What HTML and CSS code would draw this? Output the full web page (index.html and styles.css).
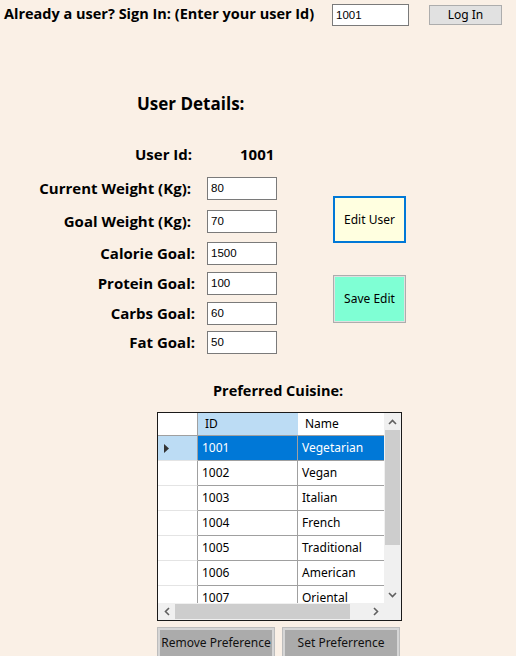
FILE: index.html
```html
<!DOCTYPE html>
<html>
<head>
<meta charset="utf-8">
<link rel="stylesheet" href="styles.css">
</head>
<body>
<div class="page">
  <div class="signin">
    <span class="signin-label">Already a user? Sign In: (Enter your user Id)</span>
    <div class="tb tb-login">1001</div>
    <div class="btn-login">Log In</div>
  </div>

  <div class="details-title">User Details:</div>

  <div class="userid-row">
    <span class="lbl userid-lbl">User Id:</span>
    <span class="lbl userid-val">1001</span>
  </div>

  <div class="form-area">
    <div class="form-grid">
      <div class="lbl f-lbl narrow">Current Weight (Kg):</div><div class="tb">80</div>
      <div class="lbl f-lbl narrow">Goal Weight (Kg):</div><div class="tb">70</div>
      <div class="lbl f-lbl">Calorie Goal:</div><div class="tb">1500</div>
      <div class="lbl f-lbl">Protein Goal:</div><div class="tb">100</div>
      <div class="lbl f-lbl">Carbs Goal:</div><div class="tb">60</div>
      <div class="lbl f-lbl">Fat Goal:</div><div class="tb">50</div>
    </div>
    <div class="side-btns">
      <div class="btn-edit">Edit User</div>
      <div class="btn-save">Save Edit</div>
    </div>
  </div>

  <div class="cuisine-title">Preferred Cuisine:</div>

  <div class="dgv">
    <div class="dgv-main">
      <div class="dgv-body">
        <div class="row hdr">
          <div class="rh corner"></div>
          <div class="c c-id hsel">ID</div>
          <div class="c c-name">Name</div>
        </div>
        <div class="row sel">
          <div class="rh rhsel"><svg width="5" height="9" viewBox="0 0 5 9"><path d="M0 0 L5 4.5 L0 9 Z" fill="#333"/></svg></div>
          <div class="c c-id">1001</div>
          <div class="c c-name">Vegetarian</div>
        </div>
        <div class="row"><div class="rh"></div><div class="c c-id">1002</div><div class="c c-name">Vegan</div></div>
        <div class="row"><div class="rh"></div><div class="c c-id">1003</div><div class="c c-name">Italian</div></div>
        <div class="row"><div class="rh"></div><div class="c c-id">1004</div><div class="c c-name">French</div></div>
        <div class="row"><div class="rh"></div><div class="c c-id">1005</div><div class="c c-name">Traditional</div></div>
        <div class="row"><div class="rh"></div><div class="c c-id">1006</div><div class="c c-name">American</div></div>
        <div class="row"><div class="rh"></div><div class="c c-id">1007</div><div class="c c-name">Oriental</div></div>
      </div>
      <div class="vscroll">
        <div class="arrow"><svg width="9" height="6" viewBox="0 0 9 6"><path d="M1 5 L4.5 1.5 L8 5" stroke="#606060" stroke-width="1.6" fill="none"/></svg></div>
        <div class="vtrack"><div class="vthumb"></div></div>
        <div class="arrow"><svg width="9" height="6" viewBox="0 0 9 6"><path d="M1 1 L4.5 4.5 L8 1" stroke="#606060" stroke-width="1.6" fill="none"/></svg></div>
      </div>
    </div>
    <div class="hscroll">
      <div class="harrow"><svg width="6" height="9" viewBox="0 0 6 9"><path d="M5 1 L1.5 4.5 L5 8" stroke="#606060" stroke-width="1.6" fill="none"/></svg></div>
      <div class="htrack"><div class="hthumb"></div></div>
      <div class="harrow"><svg width="6" height="9" viewBox="0 0 6 9"><path d="M1 1 L4.5 4.5 L1 8" stroke="#606060" stroke-width="1.6" fill="none"/></svg></div>
      <div class="hcorner"></div>
    </div>
  </div>

  <div class="bottom-btns">
    <div class="btn-gray">Remove Preference</div>
    <div class="btn-gray">Set Preferrence</div>
  </div>
</div>
</body>
</html>
```

FILE: styles.css
```css
html, body {
  margin: 0;
  padding: 0;
  background: #FAF0E6;
  overflow: hidden;
}
body {
  width: 516px;
  height: 656px;
  font-family: "Open Sans", "Noto Sans", sans-serif;
  color: #000;
}
.page {
  display: flex;
  flex-direction: column;
}
.signin {
  display: flex;
  align-items: flex-start;
  height: 30px;
  padding-left: 4px;
}
.signin-label {
  font-weight: 700;
  font-size: 14.5px;
  line-height: 20px;
  margin-top: 4px;
  width: 328px;
  white-space: nowrap;
}
.tb {
  box-sizing: border-box;
  width: 70px;
  height: 23px;
  background: #fff;
  border: 1px solid #7a7a7a;
  font-family: "Liberation Sans", Arial, sans-serif;
  font-size: 11.5px;
  line-height: 21px;
  padding-left: 3px;
  color: #000;
}
.tb-login {
  width: 77px;
  margin-top: 4px;
  height: 22px;
  line-height: 20px;
}
.btn-login {
  box-sizing: border-box;
  width: 73px;
  height: 20px;
  margin-top: 5px;
  margin-left: 20px;
  background: #E1E1E1;
  border: 1px solid #ADADAD;
  font-family: "Noto Sans", sans-serif;
  font-size: 12px;
  line-height: 18px;
  text-align: center;
}
.details-title {
  font-weight: 700;
  font-size: 17px;
  line-height: 22px;
  margin-left: 137px;
  margin-top: 63px;
}
.lbl {
  font-weight: 700;
  font-size: 15px;
  white-space: nowrap;
}
.userid-row {
  display: flex;
  margin-top: 29px;
  height: 20px;
  line-height: 20px;
}
.userid-lbl {
  margin-left: 135px;
  width: 105px;
}
.form-area {
  display: flex;
  margin-top: 13px;
}
.form-grid {
  display: grid;
  grid-template-columns: 195px 70px;
  grid-template-rows: 33px 32px 30px 30px 29px 23px;
  column-gap: 12px;
}
.f-lbl {
  text-align: right;
  height: 23px;
  line-height: 23px;
}
.f-lbl.narrow {
  padding-right: 4px;
}
.side-btns {
  display: flex;
  flex-direction: column;
  margin-left: 56px;
  padding-top: 19px;
}
.btn-edit {
  box-sizing: border-box;
  width: 73px;
  height: 47px;
  background: #FFFFE0;
  border: 2px solid #0078D7;
  font-family: "Noto Sans", sans-serif;
  font-size: 12px;
  line-height: 43px;
  text-align: center;
}
.btn-save {
  box-sizing: border-box;
  width: 73px;
  height: 48px;
  margin-top: 32px;
  background: #7FFFD4;
  border: 1px solid #ADADAD;
  box-shadow: inset 0 0 0 1px #e0e0e0;
  font-family: "Noto Sans", sans-serif;
  font-size: 12px;
  line-height: 46px;
  text-align: center;
}
.cuisine-title {
  font-weight: 700;
  font-size: 14.5px;
  line-height: 20px;
  margin-left: 213px;
  margin-top: 27px;
}
.dgv {
  box-sizing: border-box;
  margin-left: 157px;
  margin-top: 11px;
  width: 245px;
  height: 209px;
  border: 1px solid #1a1a1a;
  background: #fff;
  display: flex;
  flex-direction: column;
  font-family: "Noto Sans", sans-serif;
  font-size: 12px;
}
.dgv-main {
  display: flex;
  height: 190px;
}
.dgv-body {
  width: 226px;
  overflow: hidden;
}
.row {
  display: flex;
  box-sizing: border-box;
  height: 25px;
  border-bottom: 1px solid #A0A0A0;
}
.row.hdr {
  height: 23px;
  border-bottom: 1px solid #A0A0A0;
}
.rh {
  box-sizing: border-box;
  width: 40px;
  flex: none;
  background: #fff;
  border-right: 1px solid #A0A0A0;
  display: flex;
  align-items: center;
  padding-left: 6px;
  margin-bottom: -1px;
  border-bottom: 1px solid #E4E4E4;
}
.rh.corner {
  border-bottom: none;
  margin-bottom: 0;
}
.rh.rhsel {
  background: #BCDCF4;
}
.c {
  box-sizing: border-box;
  padding-left: 4px;
  line-height: 24px;
  white-space: nowrap;
  overflow: hidden;
}
.hdr .c {
  line-height: 22px;
}
.c-id {
  width: 100px;
  border-right: 1px solid #A0A0A0;
}
.c-name {
  width: 86px;
}
.hdr .c-id {
  padding-left: 7px;
  border-right: none;
}
.hdr .c-name {
  padding-left: 7px;
}
.hsel {
  background: #BCDCF4;
}
.sel .c {
  background: #0078D7;
  color: #fff;
}
.vscroll {
  width: 17px;
  background: #F0F0F0;
  display: flex;
  flex-direction: column;
}
.arrow {
  height: 17px;
  display: flex;
  align-items: center;
  justify-content: center;
}
.vtrack {
  flex: 1;
}
.vthumb {
  margin: 0 1px;
  height: 115px;
  background: #CDCDCD;
}
.hscroll {
  display: flex;
  height: 17px;
  background: #F0F0F0;
}
.harrow {
  width: 17px;
  display: flex;
  align-items: center;
  justify-content: center;
}
.htrack {
  width: 192px;
  padding: 1px 0;
  box-sizing: border-box;
}
.hthumb {
  margin-left: 0;
  width: 175px;
  height: 15px;
  background: #CDCDCD;
}
.hcorner {
  width: 17px;
  background: #F0F0F0;
}
.bottom-btns {
  display: flex;
  gap: 7px;
  margin-left: 157px;
  margin-top: 6px;
}
.btn-gray {
  box-sizing: border-box;
  width: 118px;
  height: 32px;
  background: #ABABAB;
  border: 1px solid #BDBDBD;
  box-shadow: inset 0 0 0 2px #D6D6D6;
  font-family: "Noto Sans", sans-serif;
  font-size: 12px;
  line-height: 30px;
  text-align: center;
  color: #111;
}
```
